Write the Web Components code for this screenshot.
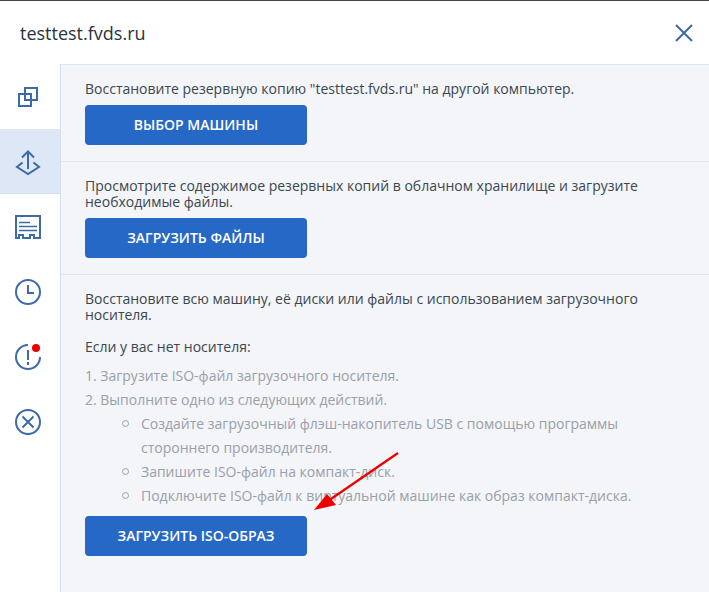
<!DOCTYPE html>
<html lang="ru"><head><meta charset="utf-8"><title>testtest.fvds.ru</title>
<style>
html,body{margin:0;padding:0;height:100%;background:#fff}
body{font-family:"Open Sans","Noto Sans",sans-serif;font-size:14px;color:#3d4a55;overflow:hidden}
</style></head><body>
<template id="t-btn"><style>
:host{display:block;width:222px;height:40px;box-sizing:border-box;background:#2668c5;border-radius:4px;color:#fff;font:600 14px/40px "Open Sans","Noto Sans",sans-serif;text-align:center}
</style><slot></slot></template>
<template id="t-nav"><style>
:host{display:block;height:65px;box-sizing:border-box;padding:20px 0 0 15px;color:#3b6ba8}
:host([active]){background:#dee7f6;border-bottom:1px solid #d3dff0}
::slotted(svg){display:block;width:26px;height:26px;fill:none;stroke:currentColor;stroke-width:2;overflow:visible}
</style><slot></slot></template>
<template id="t-section"><style>
:host{display:block;padding:16px 24px 16px 24px;border-bottom:1px solid #e3e5e8}
:host([last]){border-bottom:0}
</style><slot></slot></template>
<template id="t-app"><style>
:host{display:flex;flex-direction:column;height:592px;box-sizing:border-box;border-top:1px solid #444;position:relative;overflow:hidden}
header{height:63px;flex:none;display:flex;align-items:center;justify-content:space-between;padding:0 15px 0 20px;border-bottom:1px solid #dfe7f3;font-size:18px;color:#29333c}
.main{flex:1;display:flex;min-height:0}
nav{width:60px;flex:none;border-right:1px solid #d3dff0;background:#fff;margin-top:-1px}
main{flex:1;background:#f3f5f8;font-size:14px;line-height:16px;color:#3a4751}
.x{width:20px;height:20px;display:block;stroke:#3b6ba8;stroke-width:2;fill:none;margin-top:1px}
.arrow{position:absolute;left:300px;top:440px;width:110px;height:80px;overflow:visible;pointer-events:none}
</style>
<header><span>testtest.fvds.ru</span><svg class="x" viewBox="0 0 20 20"><path d="M2 2 18 18M18 2 2 18"/></svg></header>
<div class="main"><nav><slot name="nav"></slot></nav><main><slot></slot></main></div>
<svg class="arrow" viewBox="0 0 110 80"><path d="M98 12 28 60" stroke="#ee0000" stroke-width="2.200" fill="none"/><path d="M14 69 27 53 36 64Z" fill="#ee0000"/></svg>
</template>
<template id="t-steps"><style>
:host{display:block;color:#9aa0a8;line-height:24px;margin-top:9px;margin-bottom:8px}
</style><slot></slot></template>
<template id="t-li"><style>
:host{display:block;position:relative;padding-left:56px}
:host::before{content:"";position:absolute;left:37px;top:8px;width:5px;height:5px;border:1px solid #9aa0a8;border-radius:50%;box-sizing:content-box}
</style><slot></slot></template>

<x-app>
<x-nav slot="nav"><svg viewBox="0 0 26 26"><path d="M4 10h12v12H4zM10 4h12v12H10z"/></svg></x-nav>
<x-nav slot="nav" active><svg viewBox="0 0 26 26"><path d="M7.500 13.500 2 18l11 7 11-7-5.500-4.500"/><path d="M13 20V3M7 8.500 13 2.500l6 6"/></svg></x-nav>
<x-nav slot="nav"><svg viewBox="0 0 26 26"><path d="M1 2H25V24H19V21H15V24H8V21H4V24H1Z"/><path d="M4 8.500H15M4 12.500H22M4 16.500H22" stroke-width="1.600"/></svg></x-nav>
<x-nav slot="nav"><svg viewBox="0 0 26 26"><circle cx="13" cy="13" r="12"/><path d="M13 6v8h6"/></svg></x-nav>
<x-nav slot="nav"><svg viewBox="0 0 26 26"><path d="M25 13A12 12 0 1 1 13 1"/><path d="M13 6v10M13 18v3"/><circle cx="21" cy="4" r="4" fill="#ee0000" stroke="none"/></svg></x-nav>
<x-nav slot="nav"><svg viewBox="0 0 26 26"><circle cx="13" cy="13" r="12"/><path d="M7.500 7.500l11 11M18.500 7.500l-11 11"/></svg></x-nav>

<x-section><div style="margin:0 0 8px">Восстановите резервную копию "testtest.fvds.ru" на другой компьютер.</div><x-btn>ВЫБОР МАШИНЫ</x-btn></x-section>
<x-section><div style="margin:0 0 8px">Просмотрите содержимое резервных копий в облачном хранилище и загрузите необходимые файлы.</div><x-btn>ЗАГРУЗИТЬ ФАЙЛЫ</x-btn></x-section>
<x-section last><div>Восстановите всю машину, её диски или файлы с использованием загрузочного носителя.</div>
<div style="margin-top:16px">Если у вас нет носителя:</div>
<x-steps><div>1. Загрузите ISO-файл загрузочного носителя.</div><div>2. Выполните одно из следующих действий.</div>
<x-li>Создайте загрузочный флэш-накопитель USB с помощью программы стороннего производителя.</x-li><x-li>Запишите ISO-файл на компакт-диск.</x-li><x-li>Подключите ISO-файл к виртуальной машине как образ компакт-диска.</x-li></x-steps>
<x-btn>ЗАГРУЗИТЬ ISO-ОБРАЗ</x-btn></x-section>
</x-app>
<script>
for (const [name,id] of [['x-btn','t-btn'],['x-nav','t-nav'],['x-section','t-section'],['x-app','t-app'],['x-steps','t-steps'],['x-li','t-li']]) {
  customElements.define(name, class extends HTMLElement {
    constructor(){super();this.attachShadow({mode:'open'}).appendChild(document.getElementById(id).content.cloneNode(true));}
  });
}
</script>
</body></html>
